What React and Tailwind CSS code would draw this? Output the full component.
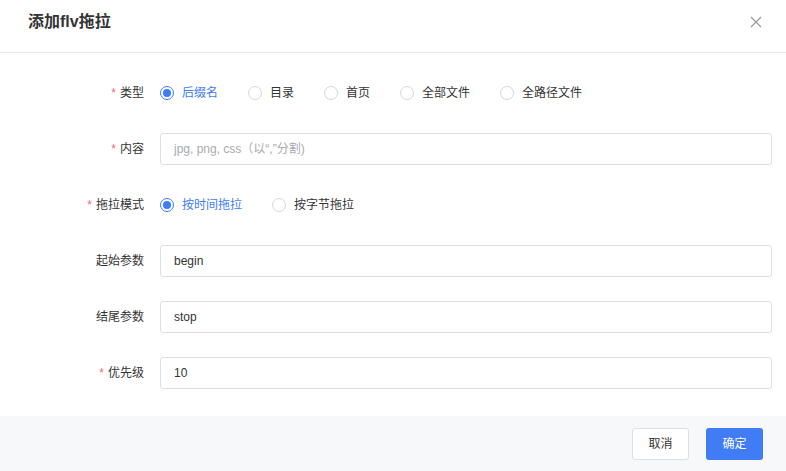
import { useState } from 'react';

const FONT = { fontFamily: '"Liberation Sans", "Noto Sans CJK SC", sans-serif' };

function Radio({ checked, label, onClick }) {
  return (
    <label onClick={onClick} className="flex items-center cursor-pointer mr-[30px]">
      <span
        className={`flex items-center justify-center w-[14px] h-[14px] rounded-full border ${
          checked ? 'border-[#3f7cf6]' : 'border-[#d4d6db]'
        } bg-white`}
      >
        {checked && <span className="w-[8px] h-[8px] rounded-full bg-[#3f7cf6]" />}
      </span>
      <span className={`ml-[8px] text-[12px] ${checked ? 'text-[#3f7cf6]' : 'text-[#333]'}`}>{label}</span>
    </label>
  );
}

function Row({ label, required, children }) {
  return (
    <div className="flex items-center h-[32px]">
      <div className="w-[144px] text-right text-[12px] text-[#333] shrink-0">
        {required && <span className="text-[#f56c6c] mr-[4px]">*</span>}
        {label}
      </div>
      <div className="flex-1 ml-[16px] flex items-center">{children}</div>
    </div>
  );
}

function Input({ value, placeholder }) {
  return (
    <input
      defaultValue={value}
      placeholder={placeholder}
      className="w-full h-[32px] rounded-[3px] border border-[#dcdfe6] bg-white px-[13px] text-[12px] text-[#333] placeholder:text-[#a8abb2] outline-none"
    />
  );
}

export default function App() {
  const [type, setType] = useState('suffix');
  const [mode, setMode] = useState('time');

  const types = [
    { key: 'suffix', label: '后缀名' },
    { key: 'dir', label: '目录' },
    { key: 'home', label: '首页' },
    { key: 'all', label: '全部文件' },
    { key: 'path', label: '全路径文件' },
  ];

  return (
    <div className="w-[786px] h-[471px] bg-white flex flex-col" style={FONT}>
      {/* Header */}
      <div className="h-[53px] flex items-center justify-between pl-[28px] pr-[24px] border-b border-[#e4e7ed] shrink-0">
        <h1 className="text-[16px] font-bold text-[#333] -mt-[8px]">添加flv拖拉</h1>
        <svg width="12" height="12" viewBox="0 0 12 12" className="-mt-[8px]">
          <path d="M1 1L11 11M11 1L1 11" stroke="#9a9a9a" strokeWidth="1.2" />
        </svg>
      </div>

      {/* Form */}
      <div className="flex-1 pt-[24px] pr-[14px] flex flex-col gap-[24px]">
        <Row label="类型" required>
          {types.map((t) => (
            <Radio key={t.key} label={t.label} checked={type === t.key} onClick={() => setType(t.key)} />
          ))}
        </Row>
        <Row label="内容" required>
          <Input placeholder="jpg, png, css（以“,”分割)" />
        </Row>
        <Row label="拖拉模式" required>
          <Radio label="按时间拖拉" checked={mode === 'time'} onClick={() => setMode('time')} />
          <Radio label="按字节拖拉" checked={mode === 'byte'} onClick={() => setMode('byte')} />
        </Row>
        <Row label="起始参数">
          <Input value="begin" />
        </Row>
        <Row label="结尾参数">
          <Input value="stop" />
        </Row>
        <Row label="优先级" required>
          <Input value="10" />
        </Row>
      </div>

      {/* Footer */}
      <div className="h-[55px] bg-[#f7f8fa] flex items-center justify-end gap-[17px] pr-[23px] shrink-0">
        <button className="w-[57px] h-[32px] rounded-[3px] border border-[#dcdfe6] bg-white text-[12px] text-[#333]">
          取消
        </button>
        <button className="w-[57px] h-[32px] rounded-[3px] bg-[#3f7cf6] text-[12px] text-white">
          确定
        </button>
      </div>
    </div>
  );
}
